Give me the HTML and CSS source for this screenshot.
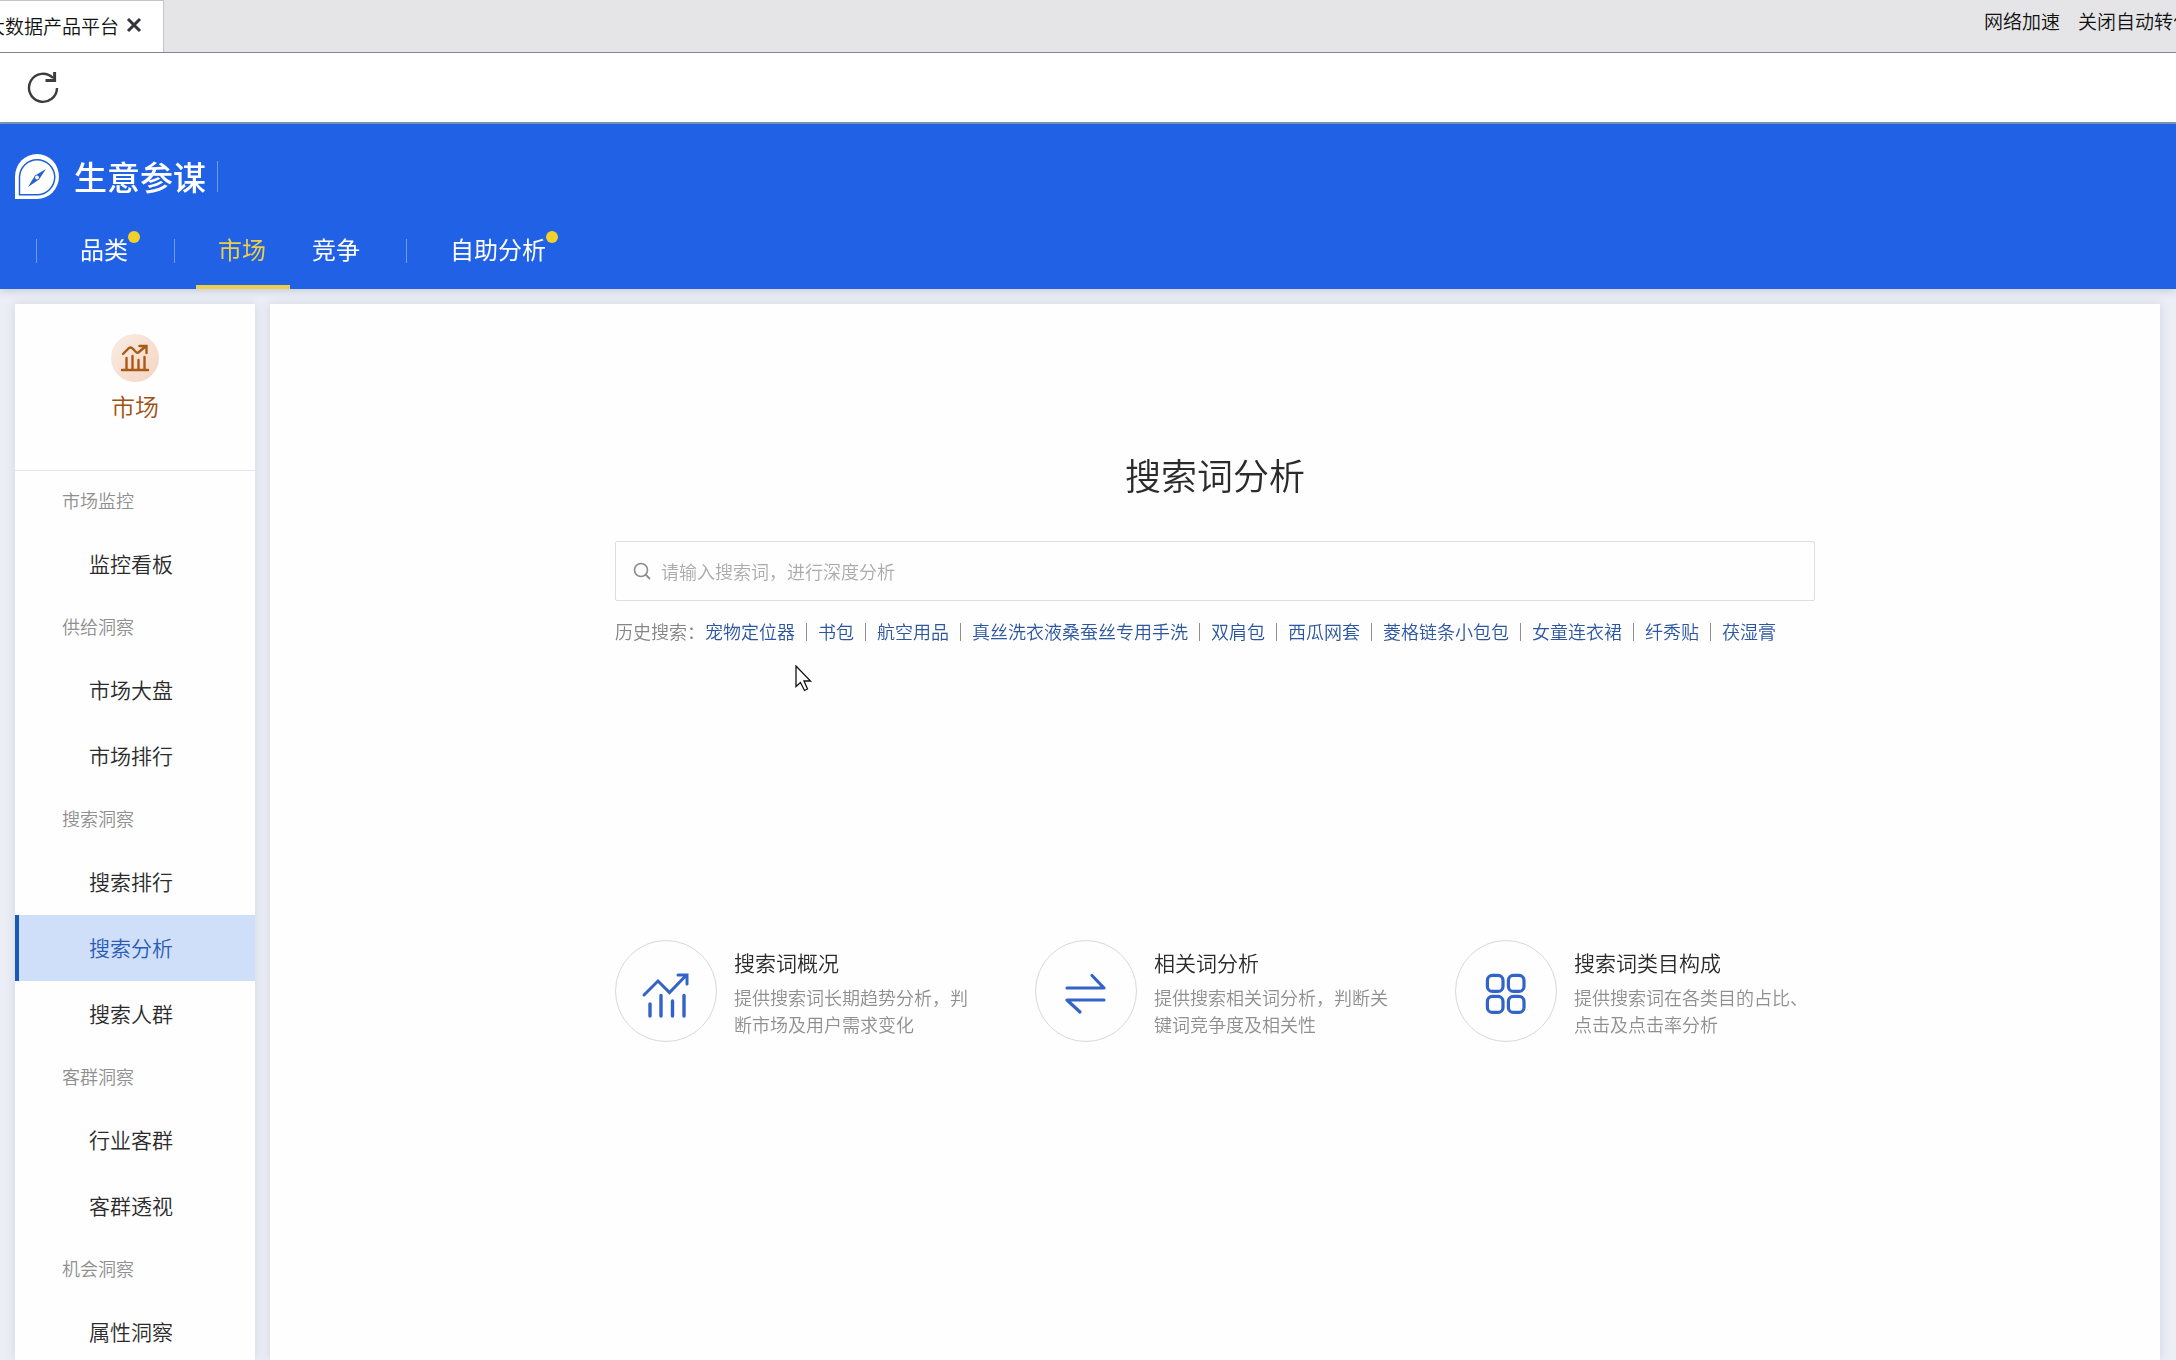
FILE: index.html
```html
<!DOCTYPE html>
<html lang="zh-CN">
<head>
<meta charset="utf-8">
<title>生意参谋</title>
<link rel="stylesheet" href="styles.css">
</head>
<body>
<div class="app">
  <div class="tabbar">
    <div class="tab">
      <span class="tab-title">大数据产品平台</span>
      <button class="tab-close" aria-label="关闭标签页"><svg width="16" height="16" viewBox="0 0 16 16"><path d="M2 2l12 12M14 2L2 14" fill="none" stroke="#34353a" stroke-width="3"/></svg></button>
    </div>
    <div class="tab-tools">
      <button class="tool">网络加速</button>
      <button class="tool">关闭自动转化</button>
    </div>
  </div>
  <div class="toolbar">
    <button class="reload" aria-label="刷新"><svg width="34" height="34" viewBox="0 0 34 34"><path d="M31 18A14 14 0 1 1 27 8" fill="none" stroke="#3d3d3f" stroke-width="2.4"/><path d="M28.600 2v8.400H19.500" fill="none" stroke="#3d3d3f" stroke-width="3"/></svg></button>
  </div>
  <header class="header">
    <div class="brand">
      <svg class="logo" width="44" height="45" viewBox="0 0 44 45"><path d="M0 45V22.500A22 22.500 0 0 1 44 22.500A22 22.500 0 0 1 22 45Z" fill="#fff"/><path d="M4.500 40.800V22.500A17.700 18.200 0 0 1 39.800 22.500A17.700 18.200 0 0 1 22 40.800Z" fill="none" stroke="#2160d8" stroke-width="1.500"/><path d="M31 15L24 25.500L13 33L20 21.500Z" fill="#2160d8"/><circle cx="22" cy="23.500" r="1.900" fill="#fff"/></svg>
      <span class="brand-name">生意参谋</span>
      <span class="brand-line"></span>
    </div>
    <nav class="nav">
      <span class="nav-line"></span>
      <a class="nav-item" href="#"><span class="nav-text dot">品类</span></a>
      <span class="nav-line"></span>
      <a class="nav-item active" href="#"><span class="nav-text">市场</span></a>
      <a class="nav-item" href="#"><span class="nav-text">竞争</span></a>
      <span class="nav-line"></span>
      <a class="nav-item" href="#"><span class="nav-text dot">自助分析</span></a>
    </nav>
  </header>
  <div class="workspace">
    <aside class="sidebar">
      <div class="side-head">
        <span class="side-icon"><svg width="30" height="28" viewBox="0 0 30 28"><path d="M3 10L9 4Q10.500 3 12 4L16 8Q17.500 9.500 19 8L26 2M19.500 2H26.500V9M2 26H28M6.500 25V14M12.500 25V12M18.500 25V16M24.500 25V13" fill="none" stroke="#aa5a17" stroke-width="2.400" stroke-linecap="round"/></svg></span>
        <span class="side-title">市场</span>
      </div>
      <nav class="menu">
        <h2 class="group">市场监控</h2>
        <a class="item" href="#">监控看板</a>
        <h2 class="group">供给洞察</h2>
        <a class="item" href="#">市场大盘</a>
        <a class="item" href="#">市场排行</a>
        <h2 class="group">搜索洞察</h2>
        <a class="item" href="#">搜索排行</a>
        <a class="item selected" href="#">搜索分析</a>
        <a class="item" href="#">搜索人群</a>
        <h2 class="group">客群洞察</h2>
        <a class="item" href="#">行业客群</a>
        <a class="item" href="#">客群透视</a>
        <h2 class="group">机会洞察</h2>
        <a class="item" href="#">属性洞察</a>
      </nav>
    </aside>
    <main class="main">
      <div class="content">
        <h1 class="title">搜索词分析</h1>
        <label class="search">
          <svg width="18" height="18" viewBox="0 0 18 18"><circle cx="8" cy="8" r="6.500" fill="none" stroke="#8c8c8c" stroke-width="1.600"/><path d="M12.500 12.500L17 17" stroke="#8c8c8c" stroke-width="1.800"/></svg>
          <input class="search-input" type="text" aria-label="搜索词" placeholder="请输入搜索词，进行深度分析">
        </label>
        <div class="history">
          <span class="history-label">历史搜索：</span>
          <ul class="history-list">
            <li><a href="#">宠物定位器</a></li>
            <li><a href="#">书包</a></li>
            <li><a href="#">航空用品</a></li>
            <li><a href="#">真丝洗衣液桑蚕丝专用手洗</a></li>
            <li><a href="#">双肩包</a></li>
            <li><a href="#">西瓜网套</a></li>
            <li><a href="#">菱格链条小包包</a></li>
            <li><a href="#">女童连衣裙</a></li>
            <li><a href="#">纤秀贴</a></li>
            <li><a href="#">茯湿膏</a></li>
          </ul>
        </div>
        <div class="cards">
          <section class="card">
            <span class="card-icon"><svg width="50" height="50" viewBox="0 0 50 50"><path d="M3 26L17 12L28.500 23.500L45 6.500" fill="none" stroke="#3263c8" stroke-width="3" stroke-linecap="round"/><path d="M37 6H46V15" fill="none" stroke="#3263c8" stroke-width="3" stroke-linecap="round"/><path d="M9 35V47M20 26.500V47M31.500 32V47M43 26.500V47" fill="none" stroke="#3263c8" stroke-width="3.400" stroke-linecap="round"/></svg></span>
            <div class="card-body">
              <h3 class="card-title">搜索词概况</h3>
              <p class="card-text">提供搜索词长期趋势分析，判断市场及用户需求变化</p>
            </div>
          </section>
          <section class="card">
            <span class="card-icon"><svg width="50" height="50" viewBox="0 0 50 50"><path d="M6 19H43L31 6.500M43 31H6L19 43" fill="none" stroke="#3263c8" stroke-width="3.200" stroke-linecap="round" stroke-linejoin="round"/></svg></span>
            <div class="card-body">
              <h3 class="card-title">相关词分析</h3>
              <p class="card-text">提供搜索相关词分析，判断关键词竞争度及相关性</p>
            </div>
          </section>
          <section class="card">
            <span class="card-icon"><svg width="50" height="50" viewBox="0 0 50 50"><g fill="none" stroke="#3263c8" stroke-width="3.200"><rect x="6.400" y="6.400" width="15.600" height="16" rx="5"/><rect x="27.400" y="6.400" width="15.600" height="16" rx="5"/><rect x="6.400" y="27.400" width="15.600" height="16" rx="5"/><rect x="27.400" y="27.400" width="15.600" height="16" rx="5"/></g></svg></span>
            <div class="card-body">
              <h3 class="card-title">搜索词类目构成</h3>
              <p class="card-text">提供搜索词在各类目的占比、点击及点击率分析</p>
            </div>
          </section>
        </div>
      </div>
    </main>
  </div>
  <svg class="cursor" width="18" height="27" viewBox="0 0 18 27"><path d="M1 1V21.500L5.500 17.500L9.500 25.500L12.500 24L9 16H15.500Z" fill="#fff" stroke="#111" stroke-width="1.300"/></svg>
</div>
</body>
</html>
```
FILE: styles.css
```css
* {
  box-sizing: border-box;
}

body {
  margin: 0;
  overflow: hidden;
  font-family: "Noto Sans CJK SC", sans-serif;
  font-weight: 350;
  font-size: 18px;
  line-height: 27px;
  color: #2b2b2b;
}

button {
  padding: 0;
  border: 0;
  background: none;
  font: inherit;
  color: inherit;
}

a {
  color: inherit;
  text-decoration: none;
}

h1, h2, h3, p, ul {
  margin: 0;
  padding: 0;
  font-weight: inherit;
}

svg {
  display: block;
  flex: none;
}

.app {
  position: relative;
  display: flex;
  flex-direction: column;
  height: 100vh;
  overflow: hidden;
  background: #ebeef5;
}

/* browser chrome */
.tabbar {
  display: flex;
  flex: none;
  justify-content: space-between;
  height: 53px;
  border-bottom: 1px solid #7d8894;
  background: #e5e5e7;
  font-size: 19px;
  color: #111;
}

.tab {
  display: flex;
  align-items: center;
  justify-content: flex-end;
  gap: 7px;
  width: 164px;
  padding: 0 21px 3px 0;
  border-top: 1px solid #c4c4c6;
  border-right: 1px solid #c4c4c6;
  background: #fff;
  overflow: hidden;
  white-space: nowrap;
}

.tab-tools {
  display: flex;
  align-items: center;
  gap: 18px;
  margin-right: -16px;
  padding-bottom: 11px;
  white-space: nowrap;
}

.toolbar {
  display: flex;
  flex: none;
  align-items: center;
  height: 71px;
  padding: 0 0 2px 26px;
  border-bottom: 2px solid #7b98b5;
  background: #fff;
}

/* site header */
.header {
  flex: none;
  height: 165px;
  padding-top: 30px;
  background: #2161e6;
  box-shadow: 0 2px 8px rgba(60, 70, 110, 0.2);
  color: #fff;
  z-index: 1;
}

.brand {
  display: flex;
  align-items: center;
  height: 45px;
  padding-left: 15px;
}

.brand-name {
  margin: 0 11px 0 15px;
  font-size: 33px;
  font-weight: 500;
  line-height: 45px;
}

.brand-line {
  width: 1px;
  height: 31px;
  background: #7399ee;
}

.nav {
  display: flex;
  align-items: center;
  height: 90px;
  padding-left: 14px;
  font-size: 24px;
  font-weight: 400;
}

.nav-line {
  width: 1px;
  height: 24px;
  margin: 14px 21px 0 22px;
  background: #7399ee;
}

.nav-item {
  display: flex;
  align-items: center;
  height: 90px;
  padding: 16px 24px 4px 22px;
  border-bottom: 4px solid transparent;
}

.nav-item.active {
  border-color: #e9cf4a;
  color: #e9cf4a;
}

.nav-text {
  position: relative;
}

.dot::after {
  content: "";
  position: absolute;
  top: -4px;
  right: -12px;
  width: 12px;
  height: 12px;
  border-radius: 50%;
  background: #f2d02c;
}

/* workspace */
.workspace {
  display: flex;
  flex: 1;
  gap: 15px;
  min-height: 0;
  padding: 15px 16px 0 15px;
}

.sidebar {
  flex: none;
  width: 240px;
  overflow-y: auto;
  scrollbar-width: none;
  background: #fefefe;
  box-shadow: 0 0 10px rgba(60, 80, 120, 0.15);
}

.side-head {
  display: flex;
  flex-direction: column;
  align-items: center;
  gap: 6px;
  height: 167px;
  padding-top: 30px;
  border-bottom: 1px solid #e6e6e8;
}

.side-icon {
  display: flex;
  align-items: center;
  justify-content: center;
  width: 48px;
  height: 48px;
  border-radius: 50%;
  background: linear-gradient(135deg, #f9ece4, #f5d5c2);
}

.side-title {
  font-size: 24px;
  line-height: 36px;
  color: #a05214;
}

.group {
  height: 60px;
  padding-left: 47px;
  font-size: 18px;
  line-height: 58px;
  color: #8f8f8f;
}

.item {
  display: block;
  height: 66px;
  padding-left: 70px;
  border-left: 4px solid transparent;
  font-size: 21px;
  line-height: 64px;
}

.item.selected {
  border-color: #1859b5;
  background: #cfdff9;
  color: #2b5cb5;
}

.main {
  flex: 1;
  min-width: 0;
  padding-top: 143px;
  background: #fefefe;
  box-shadow: 0 0 10px rgba(60, 80, 120, 0.15);
}

.content {
  max-width: 1200px;
  margin: 0 auto;
}

.title {
  font-size: 36px;
  line-height: 54px;
  text-align: center;
}

.search {
  display: flex;
  align-items: center;
  gap: 10px;
  height: 60px;
  margin-top: 40px;
  padding: 0 17px;
  border: 1px solid #dddde2;
  border-radius: 2px;
}

.search-input {
  flex: 1;
  padding: 0;
  border: 0;
  outline: 0;
  background: none;
  font: inherit;
  color: inherit;
}

.search-input::placeholder {
  color: #ababab;
}

.history {
  display: flex;
  margin-top: 17px;
}

.history-label {
  color: #858585;
}

.history-list {
  display: flex;
  list-style: none;
  white-space: nowrap;
  color: #2c56a0;
}

.history-list li {
  display: flex;
  align-items: center;
}

.history-list li + li::before {
  content: "";
  width: 1px;
  height: 18px;
  margin: 0 11px;
  background: #8f8f8f;
}

.cards {
  display: grid;
  grid-template-columns: repeat(3, 1fr);
  gap: 60px;
  margin-top: 295px;
}

.card {
  display: flex;
  gap: 17px;
}

.card-icon {
  display: flex;
  flex: none;
  align-items: center;
  justify-content: center;
  width: 102px;
  height: 102px;
  padding-top: 6px;
  border: 1px solid #d8d8de;
  border-radius: 50%;
}

.card-body {
  flex: 1;
  padding-top: 6px;
}

.card-title {
  font-size: 21px;
  line-height: 32px;
}

.card-text {
  margin-top: 6px;
  color: #8f8f8f;
}

/* pointer drawn over the page */
.cursor {
  position: absolute;
  top: 665px;
  left: 795px;
}
```
